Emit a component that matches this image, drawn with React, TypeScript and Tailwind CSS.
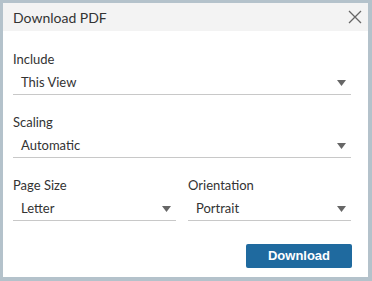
import React from "react";

function Caret() {
  return (
    <svg width="9" height="6" viewBox="0 0 9 6" className="shrink-0">
      <path d="M0 0h9L4.5 6z" fill="#666" />
    </svg>
  );
}

function SelectBox({ label, value }: { label: string; value: string }) {
  return (
    <div className="flex flex-col">
      <div className="text-[13px] leading-[16px] text-[#333]">{label}</div>
      <div className="mt-[5px] flex h-[23px] items-center justify-between border-b border-[#c8c8c8] pl-[8px] pr-[5px]">
        <span className="text-[13px] text-[#333]">{value}</span>
        <Caret />
      </div>
    </div>
  );
}

export default function App() {
  return (
    <div className="h-[281px] w-[372px] bg-white font-['Lato',sans-serif]">
      <div className="flex h-full flex-col border-t-[3px] border-l-[3px] border-r-[4px] border-b-[4px] border-[#b4c2cb]">
        <div className="flex h-[28px] items-center justify-between bg-[#f3f3f3] pl-[10px] pr-[6px]">
          <span className="text-[14px] text-[#333]">Download PDF</span>
          <svg width="14" height="14" viewBox="0 0 14 14">
            <path d="M1 1l12 12M13 1L1 13" stroke="#666" strokeWidth="1.3" />
          </svg>
        </div>
        <div className="flex flex-col gap-[19px] pl-[10px] pr-[17px] pt-[20px]">
          <SelectBox label="Include" value="This View" />
          <SelectBox label="Scaling" value="Automatic" />
          <div className="grid grid-cols-2 gap-[12px]">
            <SelectBox label="Page Size" value="Letter" />
            <SelectBox label="Orientation" value="Portrait" />
          </div>
        </div>
        <div className="mt-auto flex justify-end px-[16px] pb-[9px]">
          <button className="h-[24px] w-[106px] rounded-[2px] bg-[#1f6a9f] text-[13px] font-bold text-white font-['Liberation_Sans',sans-serif]">
            Download
          </button>
        </div>
      </div>
    </div>
  );
}
